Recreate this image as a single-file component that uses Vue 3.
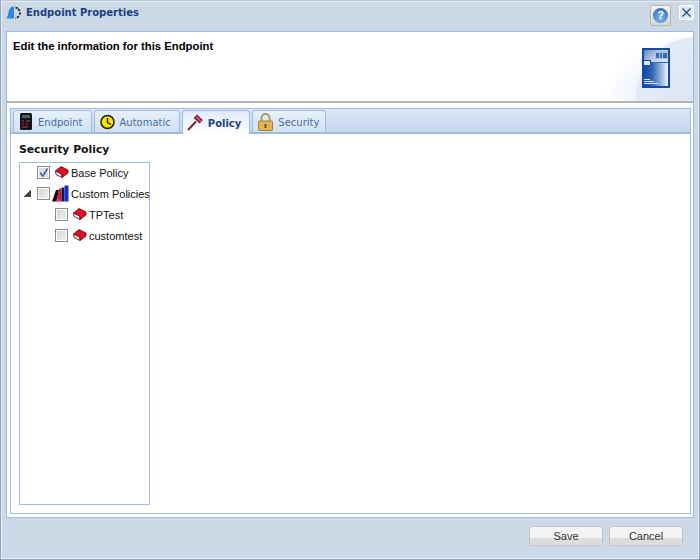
<script setup>
const tabs = [
  { name: 'Endpoint', icon: 'endpoint' },
  { name: 'Automatic', icon: 'clock' },
  { name: 'Policy', icon: 'gavel', active: true },
  { name: 'Security', icon: 'lock' }
]

const nodes = [
  { label: 'Base Policy', level: 0, icon: 'book', checked: true },
  { label: 'Custom Policies', level: 0, icon: 'books', open: true },
  { label: 'TPTest', level: 1, icon: 'book' },
  { label: 'customtest', level: 1, icon: 'book' }
]
</script>

<template>
  <div class="dialog">
    <div class="titlebar">
      <svg class="logo" width="15" height="13" viewBox="0 0 15 13">
        <path d="M8 0.5C5 0.5 3 2.5 2.5 6C2.3 8.5 1.5 10.5 0.3 12.5H8Z" fill="#2f86dd" />
        <path d="M9.5 0.5L12 1.5L11 3L9.5 2.5ZM12.5 2L14.5 4.5L13 5.5L11.5 3.5ZM13 6.5H15V8L13 9ZM12.5 9.5L13.5 11L11 12.5L10.5 11ZM9.5 11L10 12.5H9Z" fill="#23262e" />
      </svg>
      <span class="title">Endpoint Properties</span>
      <button class="help">
        <span class="help-dot">?</span>
      </button>
      <button class="close">
        <svg width="11" height="11" viewBox="0 0 11 11">
          <path d="M1.5 1.5L9.5 9.5M9.5 1.5L1.5 9.5" stroke="#2c4f86" stroke-width="1.4" fill="none" />
        </svg>
      </button>
    </div>

    <div class="main">
      <div class="header">
        <h1>Edit the information for this Endpoint</h1>
        <svg class="ibm" width="28" height="40" viewBox="0 0 28 40">
          <defs>
            <linearGradient id="ibmFill" x1="0" y1="0" x2="1" y2="0">
              <stop offset="0" stop-color="#0f4ca3" />
              <stop offset="0.35" stop-color="#2f68b5" />
              <stop offset="1" stop-color="#eef2f9" />
            </linearGradient>
            <linearGradient id="ibmTop" x1="0" y1="0" x2="1" y2="0.5">
              <stop offset="0" stop-color="#5f86c2" />
              <stop offset="0.6" stop-color="#c3d2e8" />
              <stop offset="1" stop-color="#dbe4f1" />
            </linearGradient>
          </defs>
          <rect width="28" height="40" fill="#0f4ca3" />
          <rect x="2" y="2" width="24" height="36" fill="url(#ibmFill)" />
          <rect x="2" y="2" width="24" height="13" fill="url(#ibmTop)" />
          <rect x="1.5" y="12.5" width="7" height="5" fill="#dfe8f5" stroke="#0f4ca3" />
          <path d="M9 14.5h17" stroke="#2f68b5" />
          <path d="M13 3h13v8H13z" fill="#a9bfdf" />
          <path d="M14 5h3v5h-3zM18 5h2v5h-2zM21 5h4v5h-4z" fill="#3f6cab" />
          <path d="M2 31.5h6M2 33.5h10M2 35.5h14" stroke="#d8e4f5" stroke-width="1" />
        </svg>
      </div>

      <div class="body">
        <div class="tabpanel">
          <div class="tabstrip">
            <div v-for="tab in tabs" :key="tab.name" class="tab" :class="{ active: tab.active }">
              <svg v-if="tab.icon === 'endpoint'" class="tabicon" width="14" height="17" viewBox="0 0 14 17">
                <rect x="1" y="0" width="12" height="17" rx="1.5" fill="#14141a" />
                <rect x="3" y="2" width="8" height="3" fill="#3f6b58" />
                <path d="M3 8h2M7 8h4M3 11h2M7 11h2M3 14h6" stroke="#d03040" stroke-width="1.2" />
              </svg>
              <svg v-else-if="tab.icon === 'clock'" class="tabicon" width="15" height="16" viewBox="0 0 15 15">
                <circle cx="7.5" cy="7.5" r="6.5" fill="#f6e300" stroke="#23230c" stroke-width="1.5" />
                <path d="M7.5 3.5V8L11 10" stroke="#23230c" stroke-width="1.4" fill="none" />
              </svg>
              <svg v-else-if="tab.icon === 'gavel'" class="tabicon gavel" width="17" height="17" viewBox="0 0 17 17">
                <path d="M1 16L9 7.5" stroke="#7a2333" stroke-width="2" />
                <path d="M6.5 4L10 0.5L16 6L12.5 9.5Z" fill="#8c2a3c" />
                <path d="M9.5 3L13.5 7" stroke="#e6b8be" stroke-width="1" />
              </svg>
              <svg v-else class="tabicon" width="15" height="18" viewBox="0 0 15 18">
                <path d="M3.5 8V5a4 4 0 0 1 8 0v3" fill="none" stroke="#a99a6c" stroke-width="2" />
                <rect x="0.5" y="8" width="14" height="9.5" rx="1" fill="#e3b653" stroke="#a77f2a" />
                <rect x="6.5" y="11" width="2" height="4" fill="#6e5518" />
              </svg>
              <span class="tabtext">{{ tab.name }}</span>
            </div>
          </div>

          <div class="tabcontent">
            <h2>Security Policy</h2>
            <div class="tree">
              <div v-for="node in nodes" :key="node.label" class="node" :class="'level' + node.level">
                <span class="arrow" :class="{ open: node.open }"></span>
                <span class="check" :class="{ tick: node.checked }">
                  <svg v-if="node.checked" width="11" height="11" viewBox="0 0 11 11">
                    <path d="M2 5.5L4.8 9L9.5 1.5" fill="none" stroke="#4a62a8" stroke-width="1.6" />
                  </svg>
                </span>
                <svg v-if="node.icon === 'book'" class="nodeicon" width="14" height="12" viewBox="0 0 14 12">
                  <path d="M0.5 5L6 0.5L13 4V7L7 11.5L6.5 8Z" fill="#e80c24" stroke="#4c0610" stroke-width="0.8" />
                  <path d="M0.5 5L6.5 8L7 11.5L1 8.5Z" fill="#f6e4e4" stroke="#4c0610" stroke-width="0.8" />
                </svg>
                <svg v-else class="nodeicon books" width="17" height="17" viewBox="0 0 17 17">
                  <path d="M0 16.5L4 5H7L4.5 16.5Z" fill="#0c0c14" />
                  <path d="M4.5 16.5L7 3.5H9.5V16.5Z" fill="#d81b2c" />
                  <path d="M9.5 16.5V2.5H12.5V16.5Z" fill="#10125c" />
                  <path d="M12.5 16.5V0.5H16.5V16.5Z" fill="#1a2bd0" />
                  <path d="M5 14L8 16" stroke="#e040c0" stroke-width="1.5" />
                </svg>
                <span class="label">{{ node.label }}</span>
              </div>
            </div>
          </div>
        </div>
      </div>
    </div>

    <div class="footer">
      <button class="btn">Save</button>
      <button class="btn">Cancel</button>
    </div>
  </div>
</template>

<style>
html, body {
  margin: 0;
  background: #ccd8e6;
}
</style>

<style scoped>
.dialog {
  box-sizing: border-box;
  width: 700px;
  height: 560px;
  display: flex;
  flex-direction: column;
  background: #ccd8e6;
  border: 1px solid #8ea3bd;
  border-top-color: #b9c8da;
  box-shadow: inset 1px 1px 0 #e6edf5, inset -1px -1px 0 #e6edf5;
  font-family: "Liberation Sans", Arial, sans-serif;
}
.titlebar {
  height: 30px;
  display: flex;
  align-items: flex-start;
  padding-left: 5px;
  padding-right: 5px;
  flex: none;
}
.logo {
  margin-top: 5px;
}
.title {
  margin-left: 5px;
  margin-top: 5px;
  font-family: "DejaVu Sans", sans-serif;
  font-size: 10px;
  line-height: 13px;
  font-weight: bold;
  color: #1e3f85;
  flex: 1;
}
.help {
  width: 21px;
  height: 21px;
  margin-top: 4px;
  padding: 0;
  border: 1px solid #b5b5b5;
  border-radius: 2px;
  background: linear-gradient(#f5f5f5, #d6d6d6);
  display: flex;
  align-items: center;
  justify-content: center;
}
.help-dot {
  width: 15px;
  height: 15px;
  border-radius: 50%;
  background: radial-gradient(circle at 50% 70%, #7db4ee, #2a62b0);
  color: #fff;
  font-size: 11px;
  font-weight: bold;
  line-height: 15px;
  text-align: center;
  font-family: "Liberation Sans", sans-serif;
}
.close {
  width: 15px;
  height: 15px;
  margin-left: 8px;
  margin-top: 4px;
  padding: 0;
  border: 1px solid #fff;
  border-radius: 2px;
  background: #dfe8f3;
  display: flex;
  align-items: center;
  justify-content: center;
}
.main {
  margin: 0 5px 0 5px;
  flex: 1;
  min-height: 0;
  display: flex;
  flex-direction: column;
  border: 1px solid #9dbbe5;
  background: #fff;
}
.header {
  height: 71px;
  flex: none;
  display: flex;
  justify-content: space-between;
  padding: 7px 23px 0 6px;
  box-sizing: border-box;
  border-bottom: 2px solid #b4b4b4;
  background:
    radial-gradient(ellipse 58px 64px at 100% 100%, #dde5f5 0, #e3e9f7 98%, transparent 100%),
    radial-gradient(ellipse 90px 70px at 100% 100%, #eef2fb 60%, #fff 100%);
}
.header h1 {
  margin: 0;
  font-size: 11.3px;
  font-weight: bold;
  color: #000;
  line-height: 15px;
}
.ibm {
  margin-top: 9px;
}
.body {
  flex: 1;
  min-height: 0;
  padding: 5px 2px 3px 3px;
  display: flex;
}
.tabpanel {
  flex: 1;
  display: flex;
  flex-direction: column;
  border: 1px solid #9dbbe5;
}
.tabstrip {
  height: 25px;
  flex: none;
  display: flex;
  align-items: flex-end;
  gap: 2px;
  padding-left: 2px;
  box-sizing: border-box;
  background: linear-gradient(#dbe7f6, #c6d6ec);
  border-bottom: 2px solid #9dbbe5;
}
.tab {
  height: 22px;
  box-sizing: border-box;
  display: flex;
  align-items: center;
  gap: 5px;
  padding: 0 8px 0 5px;
  border: 1px solid #9dbbe5;
  border-bottom: none;
  border-radius: 3px 3px 0 0;
  background: linear-gradient(#e7f0fb, #d0e0f4);
  font-family: "DejaVu Sans", sans-serif;
  font-size: 10px;
  color: #4b6f9e;
}
.tab.active {
  height: 24px;
  margin-bottom: -2px;
  padding-left: 4px;
  background: linear-gradient(#dfebfa, #fff);
  color: #1e3f85;
  font-weight: bold;
}
.tab:last-child {
  padding-right: 6px;
}
.gavel {
  margin-right: -1px;
}
.tabtext {
  margin-top: 1px;
}
.tabcontent {
  flex: 1;
  min-height: 0;
  display: flex;
  flex-direction: column;
  padding: 8px 8px 8px 8px;
  background: #fff;
}
.tabcontent h2 {
  margin: 0 0 5px 0;
  font-family: "DejaVu Sans", sans-serif;
  font-size: 10.8px;
  line-height: 15px;
  font-weight: bold;
  color: #111;
}
.tree {
  flex: 1;
  width: 129px;
  border: 1px solid #9dbbe5;
  overflow: hidden;
}
.node {
  height: 21px;
  display: flex;
  align-items: center;
  white-space: nowrap;
  font-size: 11px;
  color: #111;
}
.node:first-child {
  margin-top: -1px;
}
.level0 {
  padding-left: 4px;
}
.level1 {
  padding-left: 22px;
}
.arrow {
  width: 7px;
  height: 7px;
  margin-right: 6px;
  flex: none;
}
.arrow.open {
  background: linear-gradient(135deg, transparent 50%, #444 50%);
}
.check {
  width: 11px;
  height: 11px;
  flex: none;
  border: 1px solid #8a8a8a;
  background: linear-gradient(135deg, #d0d0d0, #f4f4f4);
  box-shadow: inset 0 0 0 1px #fff;
  display: block;
}
.check.tick {
  background: #d9dde8;
}
.check svg {
  display: block;
}
.nodeicon {
  margin-left: 5px;
  margin-right: 2px;
  flex: none;
  margin-top: -2px;
}
.nodeicon.books {
  margin-left: 2px;
  margin-right: 2px;
  margin-top: -1px;
}
.footer {
  height: 41px;
  flex: none;
  display: flex;
  justify-content: flex-end;
  align-items: flex-start;
  gap: 6px;
  padding: 8px 16px 0 0;
  box-sizing: border-box;
}
.btn {
  width: 74px;
  height: 20px;
  padding: 0;
  border: 1px solid #c4c4c4;
  border-radius: 3px;
  background: linear-gradient(#f5f5f5 0, #f2f2f2 60%, #dcdcdc 60%, #dedede 100%);
  font-family: "Liberation Sans", Arial, sans-serif;
  font-size: 11px;
  color: #333;
}
</style>
